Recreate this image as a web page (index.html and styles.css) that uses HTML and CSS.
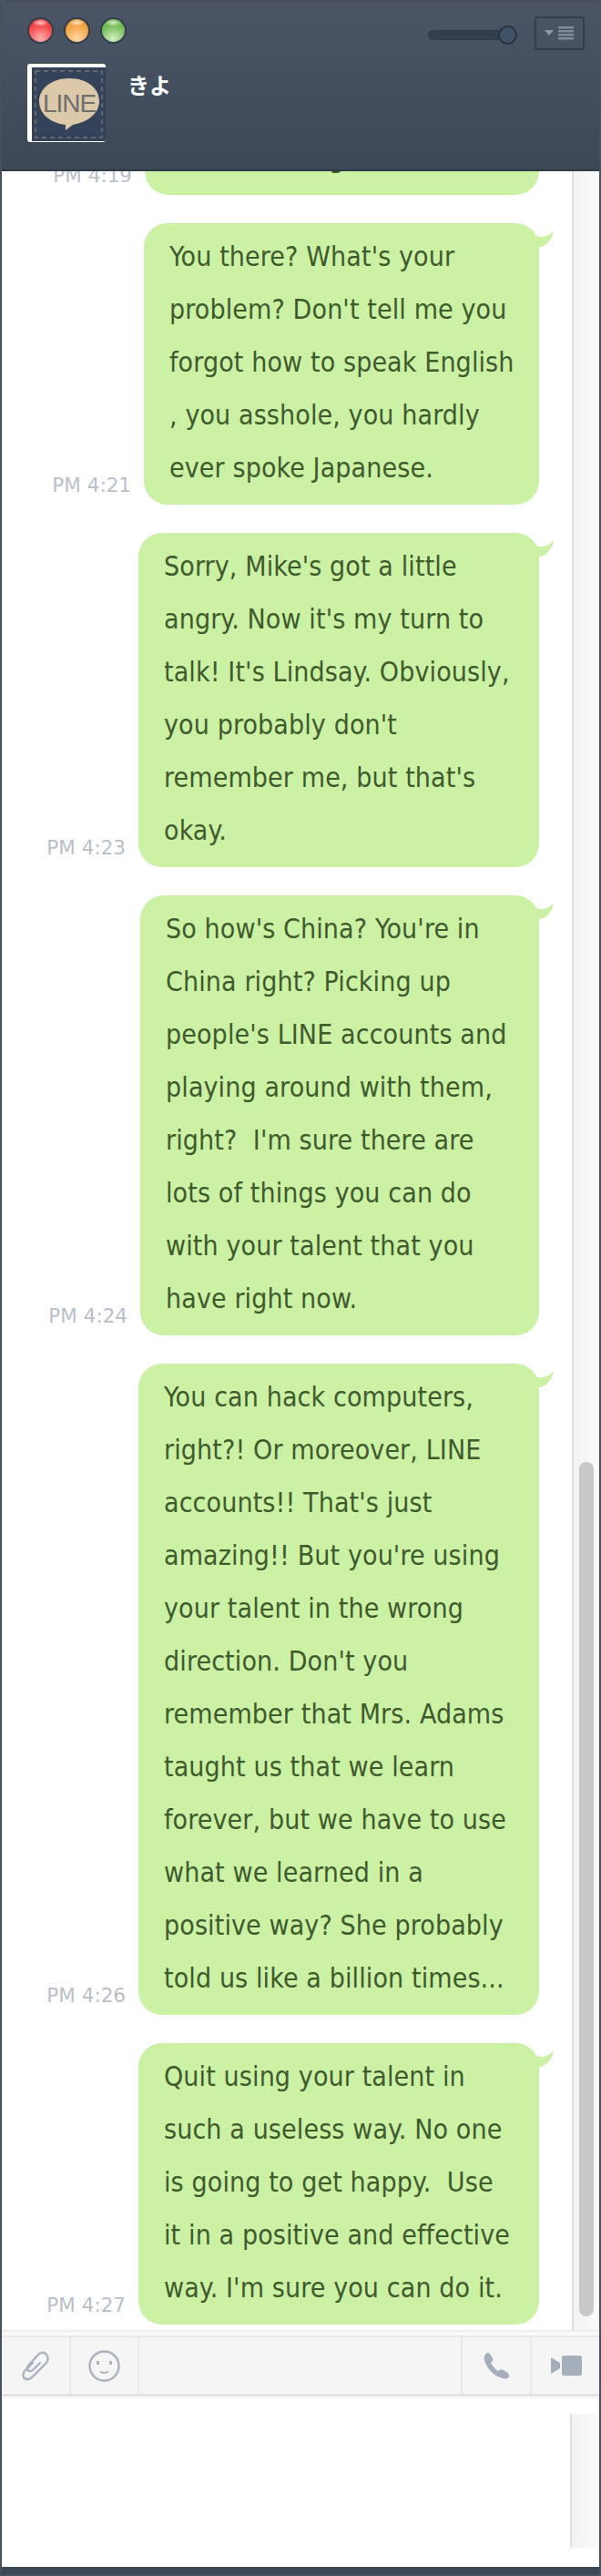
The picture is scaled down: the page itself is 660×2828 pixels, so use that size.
FILE: index.html
```html
<!DOCTYPE html>
<html lang="en">
<head>
<meta charset="utf-8">
<title>きよ</title>
<link rel="stylesheet" href="styles.css">
</head>
<body>
<div class="window">
  <header class="titlebar">
    <div class="top-row">
      <div class="lights">
        <span class="light red"></span>
        <span class="light orange"></span>
        <span class="light green"></span>
      </div>
      <div class="controls">
        <div class="slider"><span class="knob"></span></div>
        <button class="menu-btn" type="button">
          <svg width="33" height="15" viewBox="0 0 33 15"><path d="M0 4h10l-5 6z" fill="#8f99a7"/><path d="M15 0h17v2.5H15zM15 4h17v2.5H15zM15 8h17v2.5H15zM15 12h17v2.5H15z" fill="#808b99"/></svg>
        </button>
      </div>
    </div>
    <div class="profile">
      <div class="avatar">
        <svg width="81" height="81" viewBox="0 0 81 81">
          <rect x="0" y="0" width="81" height="81" fill="#34435a"/>
          <rect x="4" y="4" width="73" height="73" fill="none" stroke="#77766f" stroke-width="1.4" stroke-dasharray="5 4"/>
          <path d="M41 12c20 0 33 11 33 25 0 13-12 23-29 26l-8 6 0-6C20 61 8 51 8 37c0-14 14-25 33-25z" fill="#dcc9aa"/>
          <text x="41" y="49" class="avatar-text" text-anchor="middle">LINE</text>
        </svg>
      </div>
      <div class="name">きよ</div>
    </div>
  </header>

  <main class="chat">
    <div class="messages">
      <div class="msg">
        <time>PM 4:19</time>
        <div class="bubble stub"><span class="clipped-line">g</span></div>
      </div>
      <div class="msg">
        <time>PM 4:21</time>
        <div class="bubble narrow"><span class="tail"></span>You there? What's your<br>problem? Don't tell me you<br>forgot how to speak English<br>, you asshole, you hardly<br>ever spoke Japanese.</div>
      </div>
      <div class="msg">
        <time>PM 4:23</time>
        <div class="bubble wide"><span class="tail"></span>Sorry, Mike's got a little<br>angry. Now it's my turn to<br>talk! It's Lindsay. Obviously,<br>you probably don't<br>remember me, but that's<br>okay.</div>
      </div>
      <div class="msg">
        <time>PM 4:24</time>
        <div class="bubble mid"><span class="tail"></span>So how's China? You're in<br>China right? Picking up<br>people's LINE accounts and<br>playing around with them,<br>right? &nbsp;I'm sure there are<br>lots of things you can do<br>with your talent that you<br>have right now.</div>
      </div>
      <div class="msg">
        <time>PM 4:26</time>
        <div class="bubble wide"><span class="tail"></span>You can hack computers,<br>right?! Or moreover, LINE<br>accounts!! That's just<br>amazing!! But you're using<br>your talent in the wrong<br>direction. Don't you<br>remember that Mrs. Adams<br>taught us that we learn<br>forever, but we have to use<br>what we learned in a<br>positive way? She probably<br>told us like a billion times...</div>
      </div>
      <div class="msg">
        <time>PM 4:27</time>
        <div class="bubble wide"><span class="tail"></span>Quit using your talent in<br>such a useless way. No one<br>is going to get happy. &nbsp;Use<br>it in a positive and effective<br>way. I'm sure you can do it.</div>
      </div>
    </div>
    <div class="scrollbar"><span class="thumb"></span></div>
  </main>

  <div class="toolbar">
    <div class="tool-row">
      <button class="tool tool-clip" type="button">
        <svg width="32" height="33" viewBox="0 0 32 33" fill="none" stroke="#aab3bf" stroke-width="2.4" stroke-linecap="round"><path d="M14 13L6 21C2 25 3 30 7 31C10 32 12 30 14 28L28 14C32 10 31 5 28 3C25 1 22 2 20 4L9 16C7 18 8 21 10 22C12 23 13 22 15 20L22 13"/></svg>
      </button>
      <button class="tool tool-smile" type="button">
        <svg width="35" height="35" viewBox="0 0 35 35" fill="none" stroke="#aab3bf" stroke-width="2.4"><circle cx="17.5" cy="17.5" r="16"/><path d="M10.5 12v4M24.500 12v4" stroke-width="3"/><path d="M13 23.500c3 2 6 2 9 0" stroke-width="2"/></svg>
      </button>
      <div class="tool-space"></div>
      <button class="tool tool-call" type="button">
        <svg width="29" height="29" viewBox="0 0 29 29"><path d="M4 0C6-1 9 3 10 6C11 8 9 10 8 11C10 15 13 18 16 20C18 18 20 18 22 19C25 21 29 23 28 26C27 29 22 29 18 27C10 24 3 16 1 8C0 4 2 1 4 0Z" fill="#a5afbb"/></svg>
      </button>
      <button class="tool tool-video" type="button">
        <svg width="34" height="22" viewBox="0 0 34 22"><path d="M0 2l10 6v6L0 20z" fill="#a5afbb"/><rect x="12" y="0" width="22" height="22" rx="2" fill="#a5afbb"/></svg>
      </button>
    </div>
  </div>

  <div class="composer">
    <div class="composer-scroll"></div>
  </div>
  <footer class="bottom"></footer>
</div>
</body>
</html>
```

FILE: styles.css
```css
* { box-sizing: border-box; }

html, body {
  margin: 0;
  padding: 0;
  background: #3d4a5a;
}

.window {
  width: 660px;
  height: 2828px;
  display: flex;
  flex-direction: column;
  border-left: 2px solid #46515f;
  border-right: 2px solid #46515f;
  font-family: "DejaVu Sans Condensed", "DejaVu Sans", sans-serif;
  overflow: hidden;
}

/* Title bar */
.titlebar {
  flex: none;
  height: 188px;
  padding: 15px 16px 0 28px;
  border-top: 3px solid #4b505b;
  border-bottom: 2px solid #2f3a47;
  background: linear-gradient(#4a5666, #3c4856);
}

.top-row {
  display: flex;
  justify-content: space-between;
  align-items: flex-start;
  height: 37px;
}

.lights {
  display: flex;
  gap: 15px;
  padding: 3px 0 0 2px;
}

.light {
  width: 25px;
  height: 25px;
  border-radius: 50%;
  box-shadow: 0 0 0 2px #333e4c;
}

.red {
  background:
    radial-gradient(ellipse 9px 4px at 50% 4px, #ffd0d0 0, rgba(255, 208, 208, 0) 100%),
    radial-gradient(circle at 50% 85%, #ffb0b0 0, #f94848 60%, #e62d2d 100%);
}
.orange {
  background:
    radial-gradient(ellipse 9px 4px at 50% 4px, #ffe6c4 0, rgba(255, 230, 196, 0) 100%),
    radial-gradient(circle at 50% 85%, #ffd8a6 0, #f3a343 60%, #e08c2c 100%);
}
.green {
  background:
    radial-gradient(ellipse 9px 4px at 50% 4px, #d8f0cc 0, rgba(216, 240, 204, 0) 100%),
    radial-gradient(circle at 50% 85%, #d3ecc5 0, #76bf56 60%, #5aa63e 100%);
}

.controls {
  display: flex;
  align-items: flex-start;
  gap: 19px;
}

.slider {
  position: relative;
  width: 98px;
  height: 11px;
  margin-top: 15px;
  border-radius: 6px;
  background: #333f4e;
  border: 1px solid #2e3947;
}

.knob {
  position: absolute;
  right: -1px;
  top: -6px;
  width: 21px;
  height: 21px;
  border-radius: 50%;
  background: #415266;
  border: 2px solid #29333f;
}

.menu-btn {
  width: 55px;
  height: 37px;
  padding: 0;
  display: flex;
  align-items: center;
  justify-content: center;
  background: transparent;
  border: 2px solid #333e4c;
  border-radius: 3px;
}

.profile {
  display: flex;
  align-items: flex-start;
  gap: 24px;
  margin-top: 15px;
}

.avatar {
  width: 86px;
  height: 86px;
  flex: none;
  padding: 4px 0 0 5px;
  background: #fff;
  border-radius: 3px;
  overflow: hidden;
}

.avatar svg { display: block; }

.avatar-text {
  font-family: "Liberation Sans", Arial, sans-serif;
  font-size: 28px;
  fill: #6f6f6d;
  letter-spacing: -1px;
}

.name {
  margin-top: 5px;
  font-family: "Noto Sans CJK JP", sans-serif;
  font-weight: 700;
  font-size: 24px;
  line-height: 36px;
  color: #fff;
}

/* Messages */
.chat {
  flex: 1 1 auto;
  min-height: 0;
  display: flex;
  background: #fff;
  overflow: hidden;
}

.messages {
  flex: 1 1 auto;
  min-width: 0;
  padding: 0 36px 6px 0;
  display: flex;
  flex-direction: column;
  justify-content: flex-end;
  gap: 31px;
}

.msg {
  flex: none;
  display: flex;
  justify-content: flex-end;
  align-items: flex-end;
  gap: 14px;
}

.msg time {
  font-family: "DejaVu Sans", sans-serif;
  font-size: 21.500px;
  line-height: 26px;
  color: #b9bfc9;
  white-space: nowrap;
  margin-bottom: 8px;
}

.bubble {
  position: relative;
  padding: 8px 0 11px 28px;
  border-radius: 26px;
  background: #cbf1a4;
  color: #3f5a2d;
  font-size: 30px;
  letter-spacing: 0.12px;
  line-height: 58px;
  white-space: nowrap;
}

.stub { width: 433px; height: 77px; }
.narrow { width: 434px; }
.wide { width: 440px; }
.mid { width: 438px; }

.clipped-line { padding-left: 174px; }

.tail {
  position: absolute;
  top: 6px;
  right: -17px;
  width: 24px;
  height: 22px;
  background: #cbf1a4;
  clip-path: path("M2 7C8 11 18 9 23 2C22 12 14 20 7 20L0 20L0 7Z");
}

.scrollbar {
  position: relative;
  flex: none;
  width: 30px;
  border-left: 2px solid #dedede;
  background: linear-gradient(90deg, #f2f2f2, #fafafa);
}

.thumb {
  position: absolute;
  left: 6px;
  top: 1417px;
  width: 16px;
  height: 938px;
  border-radius: 8px;
  background: #c8c8c8;
}

/* Toolbar */
.toolbar {
  flex: none;
  height: 76px;
  padding: 4px 0 3px;
  background: #fafafa;
  border-top: 2px solid #eee;
}

.tool-row {
  height: 67px;
  display: flex;
  background: #f5f5f5;
  border-top: 2px solid #e9e9e9;
  border-bottom: 3px solid #e3e3e3;
}

.tool {
  flex: none;
  padding: 0;
  display: flex;
  align-items: center;
  justify-content: center;
  background: transparent;
  border: 0;
  border-right: 2px solid #e8e8e8;
}

.tool-clip { width: 76px; padding-right: 2px; }
.tool-smile { width: 75px; }
.tool-space { flex: 1 1 auto; border-right: 2px solid #e8e8e8; }
.tool-call { width: 76px; }
.tool-video { width: 74px; border-right: 0; padding-left: 2px; }

/* Composer */
.composer {
  flex: none;
  height: 184px;
  padding: 16px 1px 21px 0;
  display: flex;
  justify-content: flex-end;
  background: #fff;
}

.composer-scroll {
  width: 31px;
  border-left: 2px solid #dedede;
  background: linear-gradient(90deg, #f2f2f2, #fafafa);
}

.bottom {
  flex: none;
  height: 10px;
  background: #3b4858;
  border-bottom: 2px solid #46515f;
}
```
